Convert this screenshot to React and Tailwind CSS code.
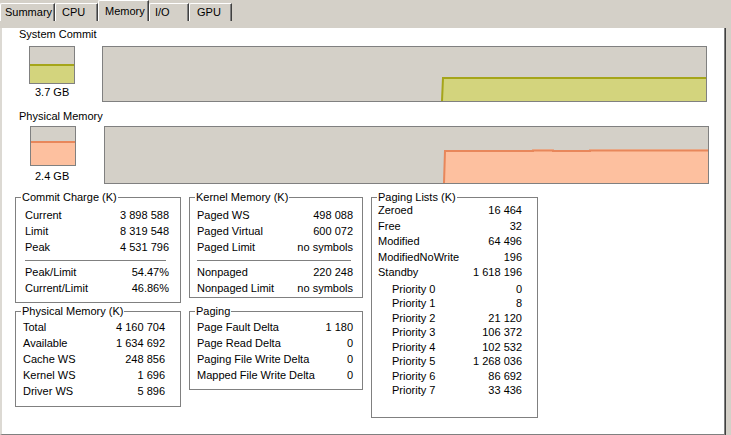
import React from "react";

function Tab({ label, selected, w }) {
  return (
    <div
      className={
        (selected
          ? "h-[21px] pt-[4px] "
          : "h-[18px] pt-[2px] ") +
        w +
        " bg-[#d4d0c8] border-t border-l border-white border-r border-r-[#404040] shadow-[inset_-1px_0_0_#808080] rounded-tl-[2px] leading-[13px] whitespace-nowrap overflow-hidden"
      }
    >
      {label}
    </div>
  );
}

function Box({ title, className, children }) {
  return (
    <div className={"relative border border-[#808080] " + className}>
      <span className="absolute -top-[7px] left-[5px] bg-white px-[1px] leading-[13px] whitespace-nowrap">
        {title}
      </span>
      {children}
    </div>
  );
}

function Row({ l, v, cls }) {
  return (
    <div className={"flex justify-between whitespace-nowrap " + cls}>
      <span>{l}</span>
      <span>{v}</span>
    </div>
  );
}

const R16 = "h-[16px] leading-[16px]";

export default function App() {
  return (
    <div className="w-[731px] h-[435px] bg-[#d4d0c8] overflow-hidden text-[11px] text-black font-['Liberation_Sans',Arial,sans-serif]">
      <div className="flex items-end h-[21px]">
        <Tab label="Summary" w="w-[55px] pl-[4px]" />
        <Tab label="CPU" w="w-[43px] pl-[6px]" />
        <Tab label="Memory" w="w-[51px] pl-[6px]" selected />
        <Tab label="I/O" w="w-[40px] pl-[5px]" />
        <Tab label="GPU" w="w-[43px] pl-[7px]" />
      </div>
      <div className="w-[726px] h-[408px] border-r border-b border-[#404040]">
        <div className="h-full bg-white border-r border-b border-[#808080] border-l-2 border-l-[#dcd9d3]">
          {/* System Commit */}
          <div className="mt-[7px] ml-[17px] leading-[13px]">System Commit</div>
          <div className="mt-[5px] flex items-start">
            <div className="ml-[27px] w-[46px]">
              <div className="h-[38px] border border-[#808080] bg-[#d4d0c8] flex flex-col justify-end">
                <div className="h-[19px] bg-[#d3d47d] border-t-2 border-[#a5a51a]" />
              </div>
              <div className="mt-[2px] ml-[6px] leading-[13px] whitespace-nowrap">3.7 GB</div>
            </div>
            <div className="ml-[27px] w-[605px] h-[56px] border border-[#808080] bg-[#d4d0c8]">
              <svg width="603" height="54" className="block">
                <polygon points="339,54 340,30 603,30 603,54" fill="#d3d47d" />
                <polyline points="339,54 340,31 603,31" fill="none" stroke="#a5a51a" strokeWidth="2" />
              </svg>
            </div>
          </div>

          {/* Physical Memory */}
          <div className="mt-[8px] ml-[17px] leading-[13px]">Physical Memory</div>
          <div className="mt-[3px] flex items-start">
            <div className="ml-[28px] w-[46px]">
              <div className="h-[40px] border border-[#808080] bg-[#d4d0c8] flex flex-col justify-end">
                <div className="h-[24px] bg-[#fdc09f] border-t-2 border-[#e8875b]" />
              </div>
              <div className="mt-[4px] ml-[5px] leading-[13px] whitespace-nowrap">2.4 GB</div>
            </div>
            <div className="ml-[28px] w-[605px] h-[58px] border border-[#808080] bg-[#d4d0c8]">
              <svg width="603" height="56" className="block">
                <polygon
                  points="339,56 340,23 428,23 428,22.5 448,22.5 448,23 485,23 485,22.5 603,22.5 603,56"
                  fill="#fdc09f"
                />
                <polyline
                  points="339,56 340,24 428,24 428,23.5 448,23.5 448,24 485,24 485,23.5 603,23.5"
                  fill="none"
                  stroke="#e8875b"
                  strokeWidth="2"
                />
              </svg>
            </div>
          </div>

          {/* Group boxes */}
          <div className="mt-[13px] ml-[13px] flex items-start gap-[8px]">
            <div className="flex flex-col">
              <Box title="Commit Charge (K)" className="w-[166px] h-[106px] pt-[9px] pl-[9px] pr-[11px]">
                <Row l="Current" v="3 898 588" cls={R16} />
                <Row l="Limit" v="8 319 548" cls={R16} />
                <Row l="Peak" v="4 531 796" cls={R16} />
                <div className="mt-[5px] mr-[3px] h-px bg-[#808080]" />
                <Row l="Peak/Limit" v="54.47%" cls={"mt-[3px] " + R16} />
                <Row l="Current/Limit" v="46.86%" cls={R16} />
              </Box>
              <Box title="Physical Memory (K)" className="mt-[8px] w-[166px] h-[96px] pt-[7px] pl-[7px] pr-[15px]">
                <Row l="Total" v="4 160 704" cls={R16} />
                <Row l="Available" v="1 634 692" cls={R16} />
                <Row l="Cache WS" v="248 856" cls={R16} />
                <Row l="Kernel WS" v="1 696" cls={R16} />
                <Row l="Driver WS" v="5 896" cls={R16} />
              </Box>
            </div>
            <div className="flex flex-col">
              <Box title="Kernel Memory (K)" className="w-[174px] h-[101px] pt-[9px] pl-[7px] pr-[9px]">
                <Row l="Paged WS" v="498 088" cls={R16} />
                <Row l="Paged Virtual" v="600 072" cls={R16} />
                <Row l="Paged Limit" v="no symbols" cls={R16} />
                <div className="mt-[5px] mr-[2px] h-px bg-[#808080]" />
                <Row l="Nonpaged" v="220 248" cls={"mt-[3px] " + R16} />
                <Row l="Nonpaged Limit" v="no symbols" cls={R16} />
              </Box>
              <Box title="Paging" className="mt-[13px] w-[174px] h-[79px] pt-[7px] pl-[7px] pr-[9px]">
                <Row l="Page Fault Delta" v="1 180" cls={R16} />
                <Row l="Page Read Delta" v="0" cls={R16} />
                <Row l="Paging File Write Delta" v="0" cls={R16} />
                <Row l="Mapped File Write Delta" v="0" cls={R16} />
              </Box>
            </div>
            <Box title="Paging Lists (K)" className="w-[167px] h-[221px] pt-[5px] pl-[6px] pr-[15px]">
              <Row l="Zeroed" v="16 464" cls="h-[15.5px] leading-[15.5px]" />
              <Row l="Free" v="32" cls="h-[15.5px] leading-[15.5px]" />
              <Row l="Modified" v="64 496" cls="h-[15.5px] leading-[15.5px]" />
              <Row l="ModifiedNoWrite" v="196" cls="h-[15.5px] leading-[15.5px]" />
              <Row l="Standby" v="1 618 196" cls="h-[15.5px] leading-[15.5px]" />
              <div className="mt-[1px] pl-[14px]">
                <Row l="Priority 0" v="0" cls="h-[14.5px] leading-[14.5px]" />
                <Row l="Priority 1" v="8" cls="h-[14.5px] leading-[14.5px]" />
                <Row l="Priority 2" v="21 120" cls="h-[14.5px] leading-[14.5px]" />
                <Row l="Priority 3" v="106 372" cls="h-[14.5px] leading-[14.5px]" />
                <Row l="Priority 4" v="102 532" cls="h-[14.5px] leading-[14.5px]" />
                <Row l="Priority 5" v="1 268 036" cls="h-[14.5px] leading-[14.5px]" />
                <Row l="Priority 6" v="86 692" cls="h-[14.5px] leading-[14.5px]" />
                <Row l="Priority 7" v="33 436" cls="h-[14.5px] leading-[14.5px]" />
              </div>
            </Box>
          </div>
        </div>
      </div>
    </div>
  );
}
